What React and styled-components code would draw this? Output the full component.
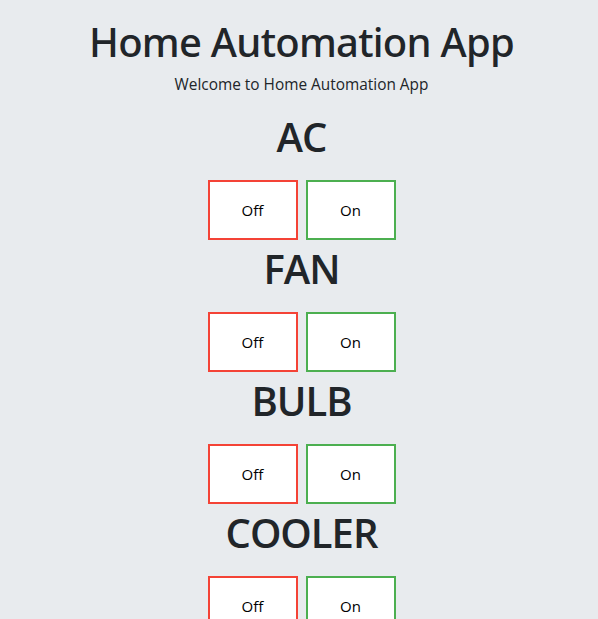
import React from 'react';
import styled, {createGlobalStyle} from 'styled-components';

const GlobalStyle = createGlobalStyle`
  body {
    margin: 0;
    background: #e8ebee;
    font-family: "Open Sans", "Noto Sans", sans-serif;
    color: #212529;
  }
`;

const Page = styled.div`
  text-align: center;
  padding: 18px 0 0 5px;
`;

const Title = styled.h1`
  margin: 0;
  font-family: "Noto Sans", "Open Sans", sans-serif;
  font-size: 40px;
  font-weight: 500;
  line-height: 48px;
  letter-spacing: -0.75px;
`;

const Subtitle = styled.p`
  margin: 7px 0 16px;
  font-size: 15.4px;
  line-height: 24px;
`;

const Device = styled.section`
  margin-bottom: 5px;
`;

const DeviceName = styled.h1`
  margin: 0;
  font-size: 40px;
  font-weight: 600;
  line-height: 48px;
  letter-spacing: -1px;
`;

const ButtonRow = styled.div`
  display: flex;
  justify-content: center;
  gap: 8px;
  margin-top: 19px;
`;

const SwitchButton = styled.button`
  width: 90px;
  height: 60px;
  background: #fff;
  border: 2px solid ${p => (p.$on ? '#4caf50' : '#f44336')};
  font-family: inherit;
  font-size: 15px;
  color: #000;
  cursor: pointer;
`;

const devices = ['AC', 'FAN', 'BULB', 'COOLER'];

const App = () => {
  return (
    <Page>
      <GlobalStyle/>
      <Title>Home Automation App</Title>
      <Subtitle>Welcome to Home Automation App</Subtitle>
      {devices.map(name => (
        <Device key={name}>
          <DeviceName>{name}</DeviceName>
          <ButtonRow>
            <SwitchButton>Off</SwitchButton>
            <SwitchButton $on>On</SwitchButton>
          </ButtonRow>
        </Device>
      ))}
    </Page>
  );
};

export default App;
